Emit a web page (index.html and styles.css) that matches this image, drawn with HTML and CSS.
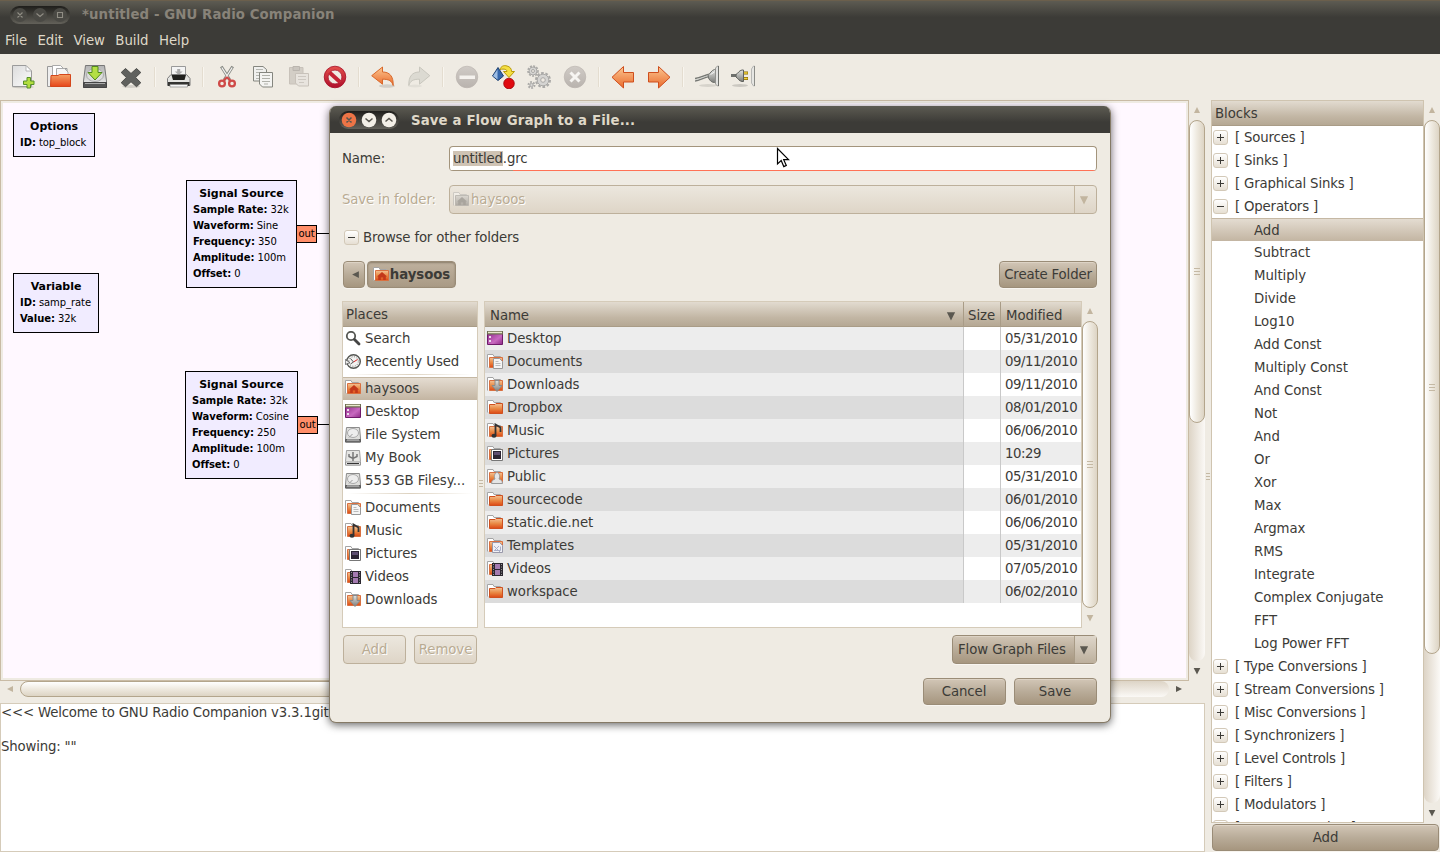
FILE: index.html
```html
<!DOCTYPE html>
<html lang="en">
<head>
<meta charset="utf-8">
<title>*untitled - GNU Radio Companion</title>
<link rel="stylesheet" href="styles.css">
</head>
<body>
<svg class="defs" aria-hidden="true">
  <defs>
    <linearGradient id="gFold" x1="0" y1="0" x2="0" y2="1"><stop offset="0" stop-color="#f4c294"/><stop offset=".5" stop-color="#e98a45"/><stop offset="1" stop-color="#dd4814"/></linearGradient>
    <linearGradient id="gBigFold" x1="0" y1="0" x2="0" y2="1"><stop offset="0" stop-color="#f4a064"/><stop offset="1" stop-color="#e6461a"/></linearGradient>
    <linearGradient id="gOrange" x1="0" y1="0" x2="0" y2="1"><stop offset="0" stop-color="#fbc791"/><stop offset="1" stop-color="#ea6a2c"/></linearGradient>
    <linearGradient id="gPaper" x1="0" y1="0" x2="1" y2="1"><stop offset="0" stop-color="#dcdcdc"/><stop offset="1" stop-color="#fcfcfc"/></linearGradient>
    <linearGradient id="gDrive" x1="0" y1="0" x2="0" y2="1"><stop offset="0" stop-color="#b4b4b4"/><stop offset="1" stop-color="#f0f0f0"/></linearGradient>
    <linearGradient id="gRed" x1="0" y1="0" x2="0" y2="1"><stop offset="0" stop-color="#e4504c"/><stop offset="1" stop-color="#b00f2c"/></linearGradient>
    <linearGradient id="gDesk" x1="0" y1="0" x2="1" y2="1"><stop offset="0" stop-color="#8d2a87"/><stop offset=".6" stop-color="#c869c0"/><stop offset="1" stop-color="#8d2a87"/></linearGradient>
    <linearGradient id="gMetal" x1="0" y1="0" x2="0" y2="1"><stop offset="0" stop-color="#e2e3e0"/><stop offset="1" stop-color="#7c7d7a"/></linearGradient>
    <linearGradient id="gDim" x1="0" y1="0" x2="0" y2="1"><stop offset="0" stop-color="#d0cbc6"/><stop offset="1" stop-color="#b9b3ae"/></linearGradient>

    <symbol id="new" viewBox="0 0 24 24"><ellipse cx="12" cy="22" rx="11" ry="1.3" fill="#000" opacity=".15"/><path d="M1.500.5h13.500l5.500 5.500v15.500h-19z" fill="url(#gPaper)" stroke="#9b9b9b"/><path d="M15 .5v5.500h5.500z" fill="#fff" stroke="#a8a8a8" stroke-width=".8"/><path d="M16 12.500h3.500v3.500h3.500v3.500h-3.500v3.500h-3.500v-3.500h-3.500v-3.500h3.500z" fill="#b2dd3f" stroke="#57902a"/></symbol>
    <symbol id="open" viewBox="0 0 24 24"><path d="M.5 21.500v-20h6l1.500 2h12v18z" fill="#eee" stroke="#999"/><path d="M5.500.5h8l3 3v9h-11z" fill="#fff" stroke="#aaa"/><path d="M9.500 3.500h8l3.500 3.500v6h-11.500z" fill="#f5f5f5" stroke="#aaa"/><path d="M3.500 21.500l.5-11h7l1.500-1h11v12z" fill="url(#gBigFold)" stroke="#d4461b"/></symbol>
    <symbol id="save" viewBox="0 0 24 24"><path d="M2.500.5h19l2 15.500v6.500h-23v-6.500z" fill="url(#gDrive)" stroke="#777"/><path d="M.500 17.500h23v5h-23z" fill="#555" stroke="#444"/><path d="M2 18.500h20" stroke="#aaa"/><ellipse cx="12" cy="10" rx="8.500" ry="6.500" fill="#ddd" stroke="#aaa"/><path d="M9 1.500h6v6h4l-7 7.500-7-7.500h4z" fill="#b4df45" stroke="#518a1c"/></symbol>
    <symbol id="close" viewBox="0 0 24 24"><ellipse cx="12" cy="21.500" rx="9" ry="1.500" fill="#000" opacity=".12"/><path d="M6.500 3.500l5.500 5 5.500-5 4.300 4-5.200 5 5.200 5.200-4.300 4-5.500-5-5.500 5-4.300-4 5.200-5.200-5.200-5z" fill="#60615e" stroke="#4c4d4a"/></symbol>
    <symbol id="print" viewBox="0 0 24 24"><path d="M4.500 11v-9.500h14v9.500" fill="#f4f4f4" stroke="#999"/><path d="M10.200 4h3v2.500h2.500l-4 3.500-4-3.500h2.500z" fill="#aaa"/><path d="M4 9.500h15.500l3.500 4v7h-22.500v-7z" fill="#e3e3e0" stroke="#7c7c7c"/><path d="M4.500 10h14.500l-1.500 5h-11.500z" fill="#20201e"/><path d="M1 17h21.500v4h-21.500z" fill="#343432"/><path d="M3 19.500h17.500v2.500h-17.500z" fill="#f5f5f5" stroke="#888" stroke-width=".7"/></symbol>
    <symbol id="cut" viewBox="0 0 24 24"><path d="M6.300 1.500l8.500 13.500M17.700 1.500l-8.500 13.500" stroke="#868883" stroke-width="3"/><path d="M6.800 2.500l7 11M17.200 2.500l-7 11" stroke="#f3f3f1" stroke-width="1.300"/><circle cx="7" cy="18.500" r="2.900" fill="none" stroke="#cf4a48" stroke-width="2.300"/><circle cx="17" cy="18.500" r="2.900" fill="none" stroke="#cf4a48" stroke-width="2.300"/><path d="M12 12l-4 4.500M12 12l4 4.500" stroke="#cf4a48" stroke-width="2"/></symbol>
    <symbol id="copy" viewBox="0 0 24 24"><path d="M2.500 1.500h9.500l3.500 3v11.500h-13z" fill="#f0f0ee" stroke="#85867f"/><path d="M5 4.500h7M5 7.500h8M5 10.500h3M5 13.500h3" stroke="#b5b6b0"/><path d="M8.500 7.500h13v14.500h-10l-3-3z" fill="#f4f4f2" stroke="#85867f"/><path d="M11 10.500h8M11 13.500h8M11 16.500h8M13 19h4" stroke="#b0b1aa"/></symbol>
    <symbol id="paste" viewBox="0 0 24 24"><path d="M2.500 2.500h13.500v16.500h-13.500z" fill="#d3cec6" stroke="#c8c2ba"/><path d="M6 1.500h6.500v4h-6.500z" fill="#cac5be" stroke="#bab5ae"/><path d="M8.500 8.500h13v12.500h-10l-3-3z" fill="#e8e4de" stroke="#c8c2ba"/><path d="M11 11.500h8M11 14.500h8M12 17.500h5" stroke="#cdc8c1"/></symbol>
    <symbol id="disable" viewBox="0 0 24 24"><circle cx="12" cy="12" r="10.800" fill="url(#gRed)" stroke="#a50f27" stroke-width=".8"/><circle cx="12" cy="12" r="6.900" fill="#efeae3" stroke="#a50f27" stroke-width=".7"/><path d="M6.500 7.500l10.500 9.500" stroke="#c52335" stroke-width="4"/></symbol>
    <symbol id="undo" viewBox="0 0 24 24"><ellipse cx="16" cy="21" rx="8" ry="1.800" fill="#000" opacity=".12"/><path d="M11.500 2v5c7 0 11 4 10.700 13.500-1.500-4.500-4-6.300-10.700-6.300v5l-10.800-8.500z" fill="url(#gOrange)" stroke="#d9682a"/></symbol>
    <symbol id="redo" viewBox="0 0 24 24"><ellipse cx="8" cy="21" rx="7" ry="1.500" fill="#000" opacity=".05"/><path d="M12.500 2v5c-7 0-11 4-10.700 13.500 1.500-4.500 4-6.300 10.700-6.300v5l10.300-8.500z" fill="#dcdad2" stroke="#c9c7be"/></symbol>
    <symbol id="minus" viewBox="0 0 24 24"><circle cx="12" cy="12" r="10.800" fill="url(#gDim)" stroke="#b8b2ac" stroke-width=".6"/><path d="M4.500 10.500h15.500v3.500h-15.500z" fill="#f5f2ee"/></symbol>
    <symbol id="generate" viewBox="0 0 24 24"><path d="M7 2.500l5.500 8.500-5.500 4.500-5.500-4.500z" fill="#3566ab" stroke="#1d4070"/><path d="M6.500 4.500v10l-4.500-3.500z" fill="#9dbde4"/><path d="M9 4.500c1-3.500 4-4.500 7-3.500 3 .8 4.500 2.500 4.500 5.500h3l-5.500 6-5.500-6h3.500c0-2-2.500-3-7-2z" fill="#f5df42" stroke="#b89a08"/><circle cx="18" cy="18.500" r="5.300" fill="#e00a10" stroke="#9c0008" stroke-width=".8"/></symbol>
    <symbol id="gears" viewBox="0 0 24 24"><g fill="none" stroke="#aaa9a7"><circle cx="6" cy="6" r="5" stroke-width="1.600" stroke-dasharray="2 1.300"/><circle cx="6" cy="6" r="4" fill="#d5d4d2"/><circle cx="6" cy="6" r="1.500" fill="#efeae3"/><circle cx="16" cy="15" r="7" stroke-width="2" stroke-dasharray="2.700 1.700"/><circle cx="16" cy="15" r="5.800" fill="#d5d4d2"/><circle cx="16" cy="15" r="2.300" fill="#efeae3"/><circle cx="4.500" cy="20" r="3" stroke-width="2" stroke-dasharray="1.700 1.400"/><circle cx="4.500" cy="20" r="1.700" fill="#d5d4d2"/></g></symbol>
    <symbol id="kill" viewBox="0 0 24 24"><circle cx="12" cy="12" r="10.800" fill="url(#gDim)" stroke="#b8b2ac" stroke-width=".6"/><path d="M7.500 7.500l9 9M16.500 7.500l-9 9" stroke="#f7f5f2" stroke-width="3"/></symbol>
    <symbol id="prev" viewBox="0 0 24 24"><path d="M12.500 1.500v6h10v9.500h-10v6l-11.500-10.700z" fill="url(#gOrange)" stroke="#cf4e1d"/></symbol>
    <symbol id="next" viewBox="0 0 24 24"><path d="M11.500 1.500v6h-10v9.500h10v6l11.500-10.700z" fill="url(#gOrange)" stroke="#cf4e1d"/></symbol>
    <symbol id="plugged" viewBox="0 0 24 24"><ellipse cx="13" cy="20.500" rx="9" ry="1.500" fill="#000" opacity=".1"/><path d="M0 16c5-1 9-3.500 14-4.500M0 13.500c5-.5 8-2.500 13-4" stroke="#777975" stroke-width="1.500" fill="none"/><path d="M0 14.800c5-.8 9-3.200 14-4.300" stroke="#d0d1cd" stroke-width="1" fill="none"/><path d="M13 9.500c2-.3 3.500-4.500 6.500-5h1v13h-1c-2.500 0-4.500-1.500-6-4.500z" fill="url(#gMetal)" stroke="#6d6f6b"/><path d="M15.500 9.500l4-2.500" stroke="#f5f5f5"/><path d="M20.500 3l2-2h1v20h-1l-2-2z" fill="#e2e2e0" stroke="#8b8c88" stroke-width=".8"/><path d="M23.500 1v20" stroke="#6d6f6b"/></symbol>
    <symbol id="unplugged" viewBox="0 0 24 24"><ellipse cx="9" cy="20.500" rx="8" ry="1.500" fill="#000" opacity=".15"/><path d="M0 10.500h6" stroke="#6f716d" stroke-width="3"/><path d="M5 9.500c2-1 3-4 6-4.500h1.500v11.500h-1.500c-3-.5-4-3-6-4.500z" fill="url(#gMetal)" stroke="#5e605c"/><path d="M13 8h4M13 13.500h4" stroke="#8a6a00" stroke-width="3.200"/><path d="M13 8h3.500M13 13.500h3.500" stroke="#f2d33c" stroke-width="1.500"/><path d="M20.500 4l2-3h1v20h-1l-2-3z" fill="#e6e6e3" stroke="#aaa" stroke-width=".8"/><path d="M23.500 1v20" stroke="#8b8c88"/></symbol>

    <symbol id="folder" viewBox="0 0 16 16"><path d="M.5 12.500v-12h5.500l1 2h6.500v3" fill="#fff" stroke="#a5a5a5"/><path d="M2.500 13.500v-9h5.500l1-1h6.500v10z" fill="url(#gFold)" stroke="#cf5020"/></symbol>
    <symbol id="base" viewBox="0 0 16 16"><path d="M.5 13.500v-13h5.500l1 2h6.500v3" fill="#fff" stroke="#a5a5a5"/><path d="M2.500 13.500v-10h13v10z" fill="url(#gFold)" stroke="#d97040"/></symbol>
    <symbol id="home" viewBox="0 0 16 16"><use href="#base"/><path d="M9 5l5 4.500h-1.200v3.500h-2.600v-2.500h-2.400v2.500h-2.600v-3.500h-1.200z" fill="#c3381a"/></symbol>
    <symbol id="docs" viewBox="0 0 16 16"><use href="#base"/><path d="M6.500 4.500h6l3 3v7h-9z" fill="#f5f5f5" stroke="#999"/><path d="M8.500 7.500h3M8.500 9.500h5M8.500 11.500h5" stroke="#bbb"/></symbol>
    <symbol id="down" viewBox="0 0 16 16"><use href="#base"/><path d="M8 3.500h4v5h3l-5 6-5-6h3z" fill="url(#gMetal)" stroke="#8a8a8a"/></symbol>
    <symbol id="music" viewBox="0 0 16 16"><use href="#base"/><path d="M8.500 12.500v-11l5 3v4.500" fill="none" stroke="#333" stroke-width="1.800"/><ellipse cx="7" cy="12.800" rx="2.500" ry="2" fill="#333"/></symbol>
    <symbol id="pics" viewBox="0 0 16 16"><use href="#base"/><path d="M4.500 3.500h11v11h-11z" fill="#fff" stroke="#777"/><path d="M6 5h8v8h-8z" fill="#2b2433"/><path d="M7 6h6v3h-6z" fill="#5d4d70"/></symbol>
    <symbol id="public" viewBox="0 0 16 16"><use href="#base"/><path d="M4.500 14.500c0-3 2-4 3.500-4.500-1.500-3 0-6.500 2-6.500s3.500 3.500 2 6.500c1.500.5 3.500 1.500 3.500 4.500z" fill="#e5e5e5" stroke="#999"/></symbol>
    <symbol id="templ" viewBox="0 0 16 16"><use href="#base"/><path d="M5.500 4.500h7l3 3v7h-10z" fill="#f0f0f4" stroke="#99a"/><path d="M7 13l5-5M7 8l6 6M7.500 12.500h6v-4" stroke="#a9aec8" fill="none"/></symbol>
    <symbol id="video" viewBox="0 0 16 16"><use href="#base"/><path d="M5 2h11v13h-11z" fill="#2b2730"/><path d="M8 3h5v5h-5zM8 9h5v5h-5z" fill="#a47bb0"/><path d="M6.500 3v12M14.500 3v12" stroke="#999" stroke-dasharray="1 1.500"/></symbol>
    <symbol id="desktop" viewBox="0 0 16 16"><path d="M.5 1.500h15v12h-15z" fill="url(#gDesk)" stroke="#6e1a69"/><path d="M0 0h16v3.500h-16z" fill="#6d6d50"/><path d="M1 1.500h14" stroke="#e8e8cc" stroke-width="1.500"/><path d="M2 5h2v2h-2zM2 9h2v2h-2z" fill="#eadcec"/></symbol>
    <symbol id="drive" viewBox="0 0 16 16"><path d="M1.500.5h13l1 10.500v4h-15v-4z" fill="#dededc" stroke="#8c8c8c"/><ellipse cx="8" cy="6" rx="5.500" ry="4.500" fill="#ededed" stroke="#aaa"/><path d="M4 10.500l3.500-3.500" stroke="#999"/><path d="M.5 12.500h15v2.500h-15z" fill="#777" stroke="#5c5c5c"/><path d="M2 13h12" stroke="#ccc"/></symbol>
    <symbol id="usb" viewBox="0 0 16 16"><path d="M1.500.5h13l1 11v3.500h-15v-3.500z" fill="#e6e6e4" stroke="#a0a0a0"/><path d="M8 2v9M4 4v2.500l4 2 4-2v-2.500" stroke="#777" stroke-width="1.500" fill="none"/><path d="M.5 12h15v3h-15z" fill="#eee" stroke="#999"/><path d="M2 13.500h12" stroke="#333"/></symbol>
    <symbol id="search" viewBox="0 0 16 16"><circle cx="6" cy="5" r="4.200" fill="#fff" stroke="#555753" stroke-width="1.800"/><path d="M9.500 8.500l4.500 4.500" stroke="#444" stroke-width="2.800" stroke-linecap="round"/></symbol>
    <symbol id="recent" viewBox="0 0 16 16"><circle cx="8.500" cy="7.500" r="6.800" fill="#f3f3f1" stroke="#555753" stroke-width="1.400"/><circle cx="8.500" cy="7.500" r="4.800" fill="none" stroke="#777" stroke-dasharray="1 1.500"/><path d="M8.500 8l4-2.500" stroke="#d22"/><path d="M8.500 8l-3-3.500M8.500 8l-3 2" stroke="#555"/><path d="M0 5.500l5 3-4.500 2z" fill="#eee" stroke="#555" stroke-width=".8"/></symbol>
    <symbol id="tri-up" viewBox="0 0 8 8"><path d="M4 1l3 6h-6z"/></symbol>
    <symbol id="tri-down" viewBox="0 0 8 8"><path d="M4 7.500l3.300-6.500h-6.600z"/></symbol>
    <symbol id="tri-left" viewBox="0 0 8 8"><path d="M1 4l6-3v6z"/></symbol>
    <symbol id="tri-right" viewBox="0 0 8 8"><path d="M7 4l-6-3v6z"/></symbol>
  </defs>
</svg>

<div class="window">
  <header class="titlebar">
    <div class="controls dim"><svg viewBox="0 0 60 18"><g class="disc"><circle cx="10" cy="9" r="7"/><circle cx="30" cy="9" r="7"/><circle cx="50" cy="9" r="7"/></g><path class="mark" d="M7.500 6.500l5 5M12.500 6.500l-5 5M26.500 7.500l3.500 3 3.500-3M47.500 6.500h5v5h-5z"/></svg></div>
    <h1>*untitled - GNU Radio Companion</h1>
  </header>
  <nav class="menubar"><span>File</span><span>Edit</span><span>View</span><span>Build</span><span>Help</span></nav>
  <div class="toolbar">
    <svg><use href="#new"/></svg><svg><use href="#open"/></svg><svg><use href="#save"/></svg><svg><use href="#close"/></svg><i></i>
    <svg><use href="#print"/></svg><i></i>
    <svg><use href="#cut"/></svg><svg><use href="#copy"/></svg><svg><use href="#paste"/></svg><svg><use href="#disable"/></svg><i></i>
    <svg><use href="#undo"/></svg><svg><use href="#redo"/></svg><i></i>
    <svg><use href="#minus"/></svg><svg><use href="#generate"/></svg><svg><use href="#gears"/></svg><svg><use href="#kill"/></svg><i></i>
    <svg><use href="#prev"/></svg><svg><use href="#next"/></svg><i></i>
    <svg><use href="#plugged"/></svg><svg><use href="#unplugged"/></svg>
  </div>

  <main class="body">
    <section class="left">
      <div class="canvas-row">
        <div class="frame"><div class="canvas">
          <div class="block options"><h2>Options</h2><p><b>ID:</b> top_block</p></div>
          <div class="block variable"><h2>Variable</h2><p><b>ID:</b> samp_rate</p><p><b>Value:</b> 32k</p></div>
          <div class="block source1"><h2>Signal Source</h2><p><b>Sample Rate:</b> 32k</p><p><b>Waveform:</b> Sine</p><p><b>Frequency:</b> 350</p><p><b>Amplitude:</b> 100m</p><p><b>Offset:</b> 0</p><span class="port">out</span><span class="wire"></span></div>
          <div class="block source2"><h2>Signal Source</h2><p><b>Sample Rate:</b> 32k</p><p><b>Waveform:</b> Cosine</p><p><b>Frequency:</b> 250</p><p><b>Amplitude:</b> 100m</p><p><b>Offset:</b> 0</p><span class="port">out</span><span class="wire"></span></div>
        </div></div>
        <div class="vscroll canvas-v"><svg class="off"><use href="#tri-up"/></svg><div class="trough"><div class="thumb"><span class="grip"></span></div></div><svg><use href="#tri-down"/></svg></div>
      </div>
      <div class="hscroll"><svg class="off"><use href="#tri-left"/></svg><div class="trough"><div class="thumb"></div></div><svg><use href="#tri-right"/></svg></div>
      <div class="console"><p>&lt;&lt;&lt; Welcome to GNU Radio Companion v3.3.1git</p><p>&nbsp;</p><p>Showing: ""</p></div>
    </section>
    <div class="splitter"><span class="grip"></span></div>
    <aside class="right">
      <div class="tree-row">
        <div class="tree">
          <div class="head">Blocks</div>
          <div class="rows">
            <div class="cat"><i class="exp plus"></i>[ Sources ]</div>
            <div class="cat"><i class="exp plus"></i>[ Sinks ]</div>
            <div class="cat"><i class="exp plus"></i>[ Graphical Sinks ]</div>
            <div class="cat"><i class="exp"></i>[ Operators ]</div>
            <div class="leaf sel">Add</div><div class="leaf">Subtract</div><div class="leaf">Multiply</div><div class="leaf">Divide</div><div class="leaf">Log10</div><div class="leaf">Add Const</div><div class="leaf">Multiply Const</div><div class="leaf">And Const</div><div class="leaf">Not</div><div class="leaf">And</div><div class="leaf">Or</div><div class="leaf">Xor</div><div class="leaf">Max</div><div class="leaf">Argmax</div><div class="leaf">RMS</div><div class="leaf">Integrate</div><div class="leaf">Complex Conjugate</div><div class="leaf">FFT</div><div class="leaf">Log Power FFT</div>
            <div class="cat"><i class="exp plus"></i>[ Type Conversions ]</div>
            <div class="cat"><i class="exp plus"></i>[ Stream Conversions ]</div>
            <div class="cat"><i class="exp plus"></i>[ Misc Conversions ]</div>
            <div class="cat"><i class="exp plus"></i>[ Synchronizers ]</div>
            <div class="cat"><i class="exp plus"></i>[ Level Controls ]</div>
            <div class="cat"><i class="exp plus"></i>[ Filters ]</div>
            <div class="cat"><i class="exp plus"></i>[ Modulators ]</div>
            <div class="cat"><i class="exp plus"></i>[ Error Correction ]</div>
          </div>
        </div>
        <div class="vscroll tree-v"><svg class="off"><use href="#tri-up"/></svg><div class="trough"><div class="thumb"><span class="grip"></span></div></div><svg><use href="#tri-down"/></svg></div>
      </div>
      <div class="btn add-block">Add</div>
    </aside>
  </main>
</div>

<div class="dialog" role="dialog">
  <header class="titlebar">
    <div class="controls"><svg viewBox="0 0 60 18"><circle cx="10" cy="9" r="7.300" fill="#ee7446"/><g class="disc"><circle cx="30" cy="9" r="7.300"/><circle cx="50" cy="9" r="7.300"/></g><path class="mark" d="M7.500 6.500l5 5M12.500 6.500l-5 5M26.500 7.500l3.500 3 3.500-3M46.500 10.500l3.500-3 3.500 3"/></svg></div>
    <h1>Save a Flow Graph to a File...</h1>
  </header>
  <div class="content">
    <div class="field name-field"><label>Name:</label><div class="entry"><mark>untitled</mark>.grc</div></div>
    <div class="field folder-field"><label>Save in folder:</label><div class="btn off combo"><span class="value"><svg class="grey"><use href="#home"/></svg>haysoos</span><span class="arrow"><svg><use href="#tri-down"/></svg></span></div></div>
    <div class="browse"><i class="exp"></i>Browse for other folders</div>
    <div class="path"><div class="btn back"><svg><use href="#tri-left"/></svg></div><div class="btn current"><svg><use href="#home"/></svg>haysoos</div><div class="btn create">Create Folder</div></div>
    <div class="panes">
      <div class="places">
        <div class="head">Places</div>
        <div class="item"><svg><use href="#search"/></svg>Search</div>
        <div class="item"><svg><use href="#recent"/></svg>Recently Used</div>
        <hr>
        <div class="item sel"><svg><use href="#home"/></svg>haysoos</div>
        <div class="item"><svg><use href="#desktop"/></svg>Desktop</div>
        <div class="item"><svg><use href="#drive"/></svg>File System</div>
        <div class="item"><svg><use href="#usb"/></svg>My Book</div>
        <div class="item"><svg><use href="#drive"/></svg>553 GB Filesy...</div>
        <hr>
        <div class="item"><svg><use href="#docs"/></svg>Documents</div>
        <div class="item"><svg><use href="#music"/></svg>Music</div>
        <div class="item"><svg><use href="#pics"/></svg>Pictures</div>
        <div class="item"><svg><use href="#video"/></svg>Videos</div>
        <div class="item"><svg><use href="#down"/></svg>Downloads</div>
      </div>
      <div class="pane-gap"><span class="grip"></span></div>
      <div class="files">
        <div class="row head"><span>Name<svg><use href="#tri-down"/></svg></span><span>Size</span><span>Modified</span></div>
        <div class="row"><span><svg><use href="#desktop"/></svg>Desktop</span><span></span><span>05/31/2010</span></div>
        <div class="row"><span><svg><use href="#docs"/></svg>Documents</span><span></span><span>09/11/2010</span></div>
        <div class="row"><span><svg><use href="#down"/></svg>Downloads</span><span></span><span>09/11/2010</span></div>
        <div class="row"><span><svg><use href="#folder"/></svg>Dropbox</span><span></span><span>08/01/2010</span></div>
        <div class="row"><span><svg><use href="#music"/></svg>Music</span><span></span><span>06/06/2010</span></div>
        <div class="row"><span><svg><use href="#pics"/></svg>Pictures</span><span></span><span>10:29</span></div>
        <div class="row"><span><svg><use href="#public"/></svg>Public</span><span></span><span>05/31/2010</span></div>
        <div class="row"><span><svg><use href="#folder"/></svg>sourcecode</span><span></span><span>06/01/2010</span></div>
        <div class="row"><span><svg><use href="#folder"/></svg>static.die.net</span><span></span><span>06/06/2010</span></div>
        <div class="row"><span><svg><use href="#templ"/></svg>Templates</span><span></span><span>05/31/2010</span></div>
        <div class="row"><span><svg><use href="#video"/></svg>Videos</span><span></span><span>07/05/2010</span></div>
        <div class="row"><span><svg><use href="#folder"/></svg>workspace</span><span></span><span>06/02/2010</span></div>
      </div>
      <div class="vscroll files-v"><svg class="off"><use href="#tri-up"/></svg><div class="trough"><div class="thumb"><span class="grip"></span></div></div><svg class="off"><use href="#tri-down"/></svg></div>
    </div>
    <div class="under"><div class="btn off">Add</div><div class="btn off">Remove</div><div class="btn combo filter"><span class="value">Flow Graph Files</span><span class="arrow"><svg><use href="#tri-down"/></svg></span></div></div>
    <div class="actions"><div class="btn">Cancel</div><div class="btn">Save</div></div>
  </div>
</div>
<svg class="cursor" viewBox="0 0 14 21"><path d="M1.500 1.500v15.500l3.700-3.400 2.600 6 2.500-1.200-2.600-5.700h4.800z" fill="#fff" stroke="#000" stroke-width="1.200"/></svg>
</body>
</html>
```
FILE: styles.css
```css
* { box-sizing: border-box; }
body { margin: 0; width: 1440px; height: 852px; overflow: hidden; background: #efebe3; color: #3c3b37; font: 13.3px/17px "DejaVu Sans", sans-serif; letter-spacing: -.06px; }
h1, h2, p { margin: 0; font-size: inherit; font-weight: inherit; }
svg { display: block; flex: none; }
.defs { position: absolute; width: 0; height: 0; }

.window { height: 852px; display: flex; flex-direction: column; }
.titlebar { flex: none; height: 27px; display: flex; align-items: center; background: linear-gradient(#5d5b52, #3c3b37 60%); }
.window > .titlebar { height: 28px; border-top: 1px solid #6b5f4c; padding-left: 10px; }
.titlebar h1 { font-weight: bold; color: #dfd8c8; margin-left: 12px; white-space: pre; letter-spacing: .1px; }
.window > .titlebar h1 { color: #888379; }
.dialog .titlebar h1 { padding-top: 1px; letter-spacing: .13px; }
.controls { width: 60px; height: 18px; border-radius: 9px; background: linear-gradient(#1f1e1b, #63615a); }
.controls svg { width: 60px; height: 18px; }
.disc { fill: #f3efe7; }
.mark { fill: none; stroke: #57554e; stroke-width: 1.5; }
.dim .disc { fill: #4a4944; }
.dim .mark { stroke: #908d84; stroke-width: 1.1; }
.menubar { flex: none; height: 26px; background: #3c3b37; color: #dfd8c8; display: flex; gap: 10.5px; padding: 4px 5px; }
.toolbar { flex: none; height: 46px; display: flex; align-items: center; padding-left: 5px; }
.toolbar svg { width: 24px; height: 24px; margin: 0 6px; }
.toolbar i { width: 2px; height: 20px; margin: 0 5px; border-left: 1px solid #e4ddd0; border-right: 1px solid #f8f5ef; }

.body { flex: 1; min-height: 0; display: flex; }
.left { width: 1205px; display: flex; flex-direction: column; }
.canvas-row { height: 581px; display: flex; }
.frame { width: 1189px; border: 1px solid #c9bba5; padding: 2px; }
.canvas { position: relative; height: 100%; background: #fff8ff; overflow: hidden; }
.block { position: absolute; background: #f1ecff; border: 1px solid #000; color: #000; font-size: 10px; line-height: 16px; padding: 5px 0 0 6px; white-space: nowrap; letter-spacing: -.07px; }
.block h2 { font-size: 11px; font-weight: bold; text-align: center; margin-left: -6px; letter-spacing: -.05px; }
.options { left: 10px; top: 10px; width: 82px; height: 44px; }
.variable { left: 10px; top: 170px; width: 86px; height: 60px; }
.source1 { left: 183px; top: 77px; width: 111px; height: 108px; }
.source2 { left: 182px; top: 268px; width: 113px; height: 108px; }
.port { position: absolute; left: 100%; top: 44px; width: 21px; height: 18px; border: 1px solid #000; background: #ff8e69; line-height: 15px; text-align: center; }
.wire { position: absolute; left: calc(100% + 21px); top: 52px; width: 200px; height: 1px; background: #000; }

.vscroll { width: 16px; display: flex; flex-direction: column; align-items: center; flex: none; }
.vscroll > svg, .hscroll > svg { width: 8px; height: 8px; fill: #5b5850; }
.vscroll > svg.off, .hscroll > svg.off { fill: #c2b59f; }
.vscroll .trough { width: 16px; border-radius: 8px; background: linear-gradient(90deg, #ddd4c6, #fbf9f6); }
.thumb { border: 1px solid #b3a58c; border-radius: 8px; background: linear-gradient(90deg, #fff, #eee9df 50%, #ddd4c4); display: flex; align-items: center; justify-content: center; }
.vscroll .thumb { width: 16px; }
.grip { width: 6px; height: 7px; background: repeating-linear-gradient(#c5b9a4 0 1px, transparent 1px 3px); }
.canvas-v { padding-top: 6px; }
.canvas-v .trough { height: 541px; margin: 6px 0; }
.canvas-v .thumb { height: 303px; }
.hscroll { height: 16px; display: flex; align-items: center; padding-left: 6px; }
.hscroll .trough { width: 1149px; height: 16px; margin: 0 6px; border-radius: 8px; background: linear-gradient(#ddd4c6, #fbf9f6); }
.hscroll .thumb { height: 16px; width: 700px; background: linear-gradient(#fff, #eee9df 50%, #ddd4c4); }
.console { flex: 1; margin-top: 6px; background: #fff; border: 1px solid #d5cbb9; line-height: 17px; white-space: pre; letter-spacing: -.17px; }
.splitter { width: 6px; display: flex; align-items: center; justify-content: center; }
.splitter .grip { width: 4px; }

.right { width: 229px; display: flex; flex-direction: column; }
.tree-row { height: 723px; display: flex; }
.tree { width: 213px; border: 1px solid #cfc4b0; background: #fff; overflow: hidden; }
.head { height: 25px; line-height: 25px; padding-left: 3px; background: linear-gradient(#e2dbd0, #c2b6a4 65%, #b5a894); border-bottom: 1px solid #a99c87; }
.cat, .leaf { height: 23px; line-height: 22px; display: flex; align-items: center; white-space: pre; }
.cat { padding-left: 1px; letter-spacing: -.18px; }
.cat .exp { margin-right: 7px; }
.leaf { padding-left: 42px; }
.sel { background: linear-gradient(#e4dcd1, #c3b5a2); border-top: 1px solid #c5b8a4; line-height: 21px; }
.exp { width: 15px; height: 15px; flex: none; border: 1px solid #d3c9b8; border-radius: 3px; background: linear-gradient(#3c3b37, #3c3b37) center / 7px 1px no-repeat, linear-gradient(#fff, #e6dfd3); }
.plus { background: linear-gradient(#3c3b37, #3c3b37) center / 7px 1px no-repeat, linear-gradient(#3c3b37, #3c3b37) center / 1px 7px no-repeat, linear-gradient(#fff, #e6dfd3); }
.tree-v { padding-top: 6px; }
.tree-v .trough { height: 683px; margin: 6px 0; }
.tree-v .thumb { height: 534px; }

.btn { display: flex; align-items: center; justify-content: center; border: 1px solid #9a8c77; border-radius: 4px; background: linear-gradient(#d2c6b6, #b9ac99 50%, #a6967f); box-shadow: 0 1px 0 #f8f5f0, inset 0 1px 0 #ddd3c5; white-space: nowrap; }
.btn.off { color: #b9ab93; border-color: #bdb09b; background: linear-gradient(#ece7de, #ded5c7); text-shadow: 1px 1px 0 #fff; box-shadow: none; }
.add-block { width: 227px; height: 27px; margin: 1px 0 0 1px; }

.dialog { position: absolute; left: 329px; top: 106px; width: 782px; height: 617px; border: 1px solid #857a66; border-top: 0; border-radius: 7px; background: #efebe3; box-shadow: 0 2px 9px rgba(0, 0, 0, .6); overflow: hidden; }
.dialog .titlebar { padding-left: 9px; }
.content { padding: 13px 13px 0 12px; }
.field { display: flex; align-items: center; }
.field label { width: 107px; letter-spacing: -.15px; }
.entry { flex: 1; height: 25px; border: 1px solid #a3947c; border-radius: 4px; background: linear-gradient(90deg, #a3947c 63px, #ff7256 63px) bottom / 100% 1px no-repeat #fff; border-bottom: 0; padding: 3px; line-height: 17px; letter-spacing: -.18px; }
.entry mark { background: #cfc3b4; color: inherit; }
.folder-field { margin-top: 14px; color: #b9ab93; text-shadow: 1px 1px 0 #fff; }
.combo { justify-content: flex-start; align-items: stretch; height: 29px; }
.combo .value { flex: 1; display: flex; align-items: center; padding-left: 3px; gap: 2px; }
.combo .arrow { width: 22px; border-left: 1px solid #a89b86; display: flex; align-items: center; justify-content: center; padding-right: 3px; }
.combo .arrow svg { width: 10px; height: 10px; fill: #5b5850; }
.off .arrow svg { fill: #c2b59f; }
.off .arrow { border-color: #c2b59f; }
.folder-field .combo { flex: 1; }
.value > svg, .current svg, .item svg, .row span > svg { width: 16px; height: 16px; }
.grey { filter: grayscale(1); opacity: .4; }
.browse { margin-top: 16px; height: 15px; display: flex; align-items: center; gap: 4px; padding-left: 2px; letter-spacing: -.18px; }
.path { margin-top: 16px; display: flex; height: 27px; padding-left: 1px; }
.back { width: 22px; }
.back svg { width: 9px; height: 9px; fill: #5b5850; margin-left: 2px; }
.current { width: 89px; margin-left: 2px; font-weight: bold; gap: 1px; background: linear-gradient(#bfb19e, #a99a85); box-shadow: inset 0 1px 2px #8a7d6a; }
.create { width: 98px; margin-left: auto; letter-spacing: -.15px; }
.panes { display: flex; height: 327px; margin-top: 13px; margin-right: -1px; }
.places { width: 136px; border: 1px solid #d5cbb9; background: #fff; }
.item { height: 23px; display: flex; align-items: center; padding-left: 2px; gap: 4px; white-space: nowrap; }
.item.sel { padding-bottom: 2px; }
.places hr { margin: 1px 4px 2px; height: 1px; border: 0; background: linear-gradient(90deg, transparent, #ddd2c0, transparent); }
.pane-gap { width: 6px; display: flex; align-items: center; padding-top: 38px; }
.pane-gap .grip { width: 4px; margin-left: 1px; }
.files { width: 598px; border: 1px solid #d5cbb9; background: #fff; }
.row { display: grid; grid-template-columns: 478px 38px 80px; height: 23px; }
.row span { display: flex; align-items: center; gap: 4px; padding-left: 2px; border-right: 1px solid #c9c9c9; background: #fff; min-width: 0; }
.row span:nth-child(1) { background: #ededed; border-right: 0; box-shadow: 1px 0 0 #c9c9c9; z-index: 1; }
.row span:nth-child(3) { border: 0; padding-left: 4px; letter-spacing: -.45px; }
.row:nth-child(odd) span { background: #ededed; }
.row:nth-child(odd) span:first-child { background: #dcdcdc; }
.files .head { height: 25px; padding: 0; }
.files .head span, .files .head span:first-child { background: none; padding-left: 5px; border-color: #a99c87; padding-top: 1px; letter-spacing: -.06px; }
.files .head span:first-child { box-shadow: 1px 0 0 #a99c87; }
.files .head svg { width: 10px; height: 10px; margin: 0 7px 0 auto; fill: #5b5850; }
.files-v { padding-top: 6px; }
.files-v .trough { height: 287px; margin: 6px 0; }
.files-v .thumb { height: 287px; }
.under { display: flex; gap: 8px; margin-top: 7px; padding-left: 1px; }
.under .btn { height: 29px; width: 63px; }
.under .filter { width: 145px; margin-left: auto; }
.under .filter .value { padding-left: 5px; }
.filter .arrow { background: linear-gradient(#ded6ca, #bdb09d); }
.actions { display: flex; justify-content: flex-end; gap: 8px; margin-top: 14px; }
.actions .btn { width: 83px; height: 27px; padding-right: 1px; }
.cursor { position: absolute; left: 776px; top: 147px; width: 14px; height: 21px; }
```
